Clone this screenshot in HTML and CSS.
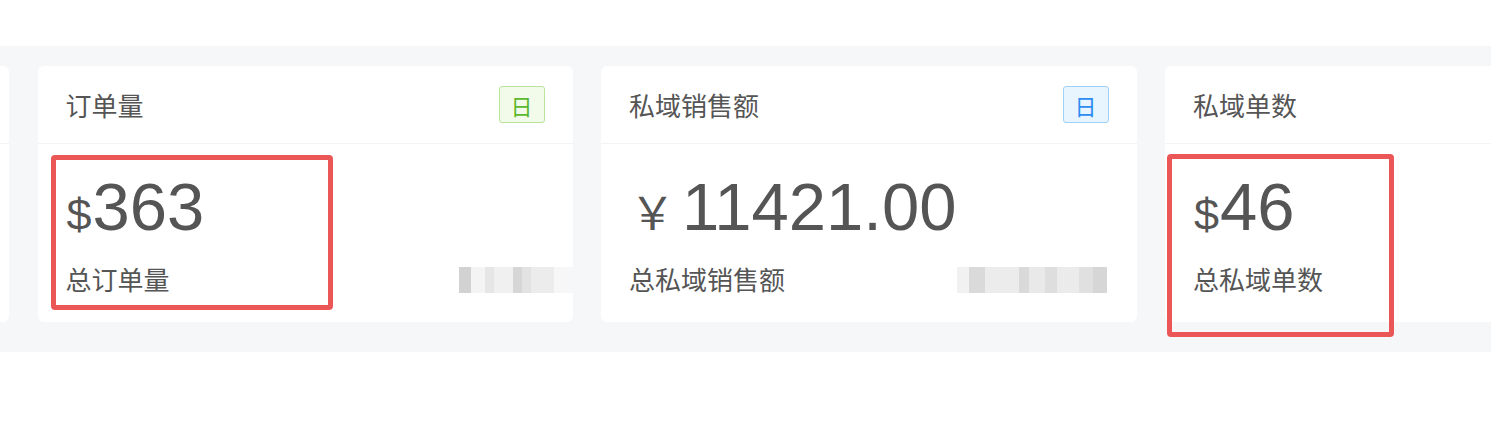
FILE: index.html
```html
<!DOCTYPE html>
<html lang="zh-CN">
<head>
    <meta charset="UTF-8">
    <meta name="viewport" content="width=device-width, initial-scale=1.0">
    <title>数据概览</title>
    <link rel="stylesheet" href="styles.css">
</head>
<body>
    <div class="topbar"></div>
    <div class="panel">
        <div class="row">
            <div class="card">
                <div class="card-head"></div>
                <div class="card-body"></div>
            </div>
            <div class="card">
                <div class="card-head">
                    <span class="title">订单量</span>
                    <span class="tag green">日</span>
                </div>
                <div class="card-body">
                    <div class="stat">
                        <div class="value"><span class="cur">$</span>363</div>
                        <div class="sub">总订单量</div>
                    </div>
                    <div class="mosaic m1"></div>
                </div>
                <div class="mark mark-a"></div>
            </div>
            <div class="card">
                <div class="card-head">
                    <span class="title">私域销售额</span>
                    <span class="tag blue">日</span>
                </div>
                <div class="card-body">
                    <div class="stat">
                        <div class="value"><span class="cur yen">￥</span>11421.00</div>
                        <div class="sub">总私域销售额</div>
                    </div>
                    <div class="mosaic m2"></div>
                </div>
            </div>
            <div class="card">
                <div class="card-head">
                    <span class="title">私域单数</span>
                </div>
                <div class="card-body">
                    <div class="stat">
                        <div class="value"><span class="cur">$</span>46</div>
                        <div class="sub">总私域单数</div>
                    </div>
                </div>
                <div class="mark mark-b"></div>
            </div>
        </div>
    </div>
</body>
</html>
```

FILE: styles.css
```css
body {
    margin: 0;
    font-family: "Liberation Sans", "Noto Sans CJK SC", sans-serif;
    background-color: #fff;
    color: #555;
}
.topbar {
    height: 46px;
    background-color: #fff;
}
.panel {
    background-color: #f5f7f9;
    padding: 20px 0 30px;
    overflow: hidden;
}
.row {
    display: flex;
    gap: 28.5px;
    margin-left: -526px;
}
.card {
    flex: 0 0 535px;
    background-color: #fff;
    border-radius: 6px;
    position: relative;
}
.card-head {
    height: 77px;
    display: flex;
    align-items: center;
    justify-content: space-between;
    padding: 0 28px;
    border-bottom: 1px solid #f3f4f6;
}
.title {
    font-size: 26px;
    color: #555;
}
.tag {
    width: 46px;
    height: 37px;
    box-sizing: border-box;
    border: 1px solid;
    border-radius: 3px;
    font-size: 22px;
    display: flex;
    align-items: center;
    justify-content: center;
}
.tag.green {
    color: #5cb82e;
    background-color: #f2fbea;
    border-color: #b7e59a;
}
.tag.blue {
    color: #2d8cf0;
    background-color: #e8f5fe;
    border-color: #9fd1f7;
}
.card-body {
    height: 127px;
    padding: 30px 30px 21px 28px;
    display: flex;
    justify-content: space-between;
    align-items: flex-end;
}
.value {
    font-size: 67px;
    line-height: 66px;
    height: 66px;
    color: #555;
    white-space: nowrap;
}
.cur {
    font-size: 45px;
    line-height: 1;
    margin-left: 1px;
    margin-right: 1px;
}
.cur.yen {
    font-family: "Noto Sans CJK SC", sans-serif;
    font-size: 45px;
    margin-left: 1px;
    margin-right: 7px;
}
.sub {
    font-size: 26px;
    line-height: 40px;
    margin-top: 21px;
}
.mosaic {
    height: 26px;
    margin-bottom: 8px;
}
.m1 {
    width: 114px;
    margin-right: -30px;
    background: linear-gradient(90deg,
        #d2d2d2 0 12px, #f4f4f4 12px 26px, #e6e6e6 26px 35px, #f0f0f0 35px 54px,
        #d6d6d6 54px 63px, #e2e2e2 63px 72px, #ececec 72px 95px, #f7f7f7 95px 114px);
}
.m2 {
    width: 150px;
    background: linear-gradient(90deg,
        #f1f1f1 0 12px, #dadada 12px 28px, #ececec 28px 62px, #d9d9d9 62px 72px,
        #e9e9e9 72px 88px, #dedede 88px 100px, #ebebeb 100px 122px, #e0e0e0 122px 136px,
        #d6d6d6 136px 150px);
}
.mark {
    position: absolute;
    border: 5px solid #eb5656;
    border-radius: 4px;
    box-sizing: border-box;
}
.mark-a {
    left: 13px;
    top: 89px;
    width: 282px;
    height: 155px;
}
.mark-b {
    left: 2px;
    top: 88px;
    width: 227px;
    height: 183px;
}
```
